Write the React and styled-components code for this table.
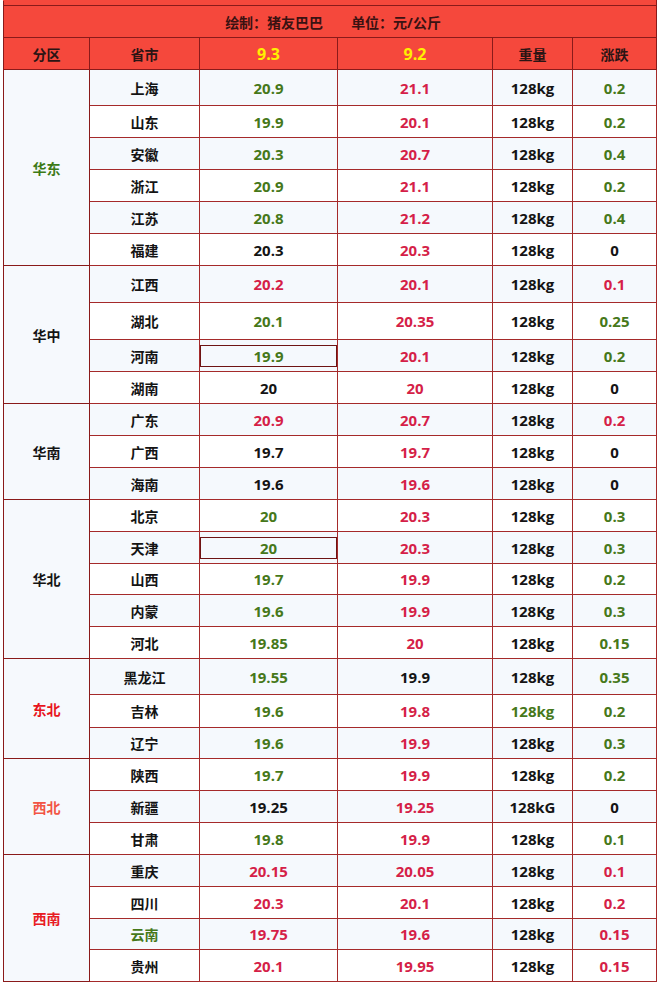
import React from "react";
import styled, { createGlobalStyle } from "styled-components";

const GlobalStyle = createGlobalStyle`
    html, body {
        margin: 0;
        padding: 0;
        background: #fff;
    }
    body {
        font-family: "Open Sans", "Noto Sans CJK SC", sans-serif;
    }
`;

const colors = {
    g: "#46781a",
    r: "#d51f48",
    k: "#141414",
};

// [province, 9.3, colour, 9.2, colour, weight, colour, change, colour, row height]
const regions = [
    {
        name: "华东",
        color: "#3c7a16",
        rows: [
            ["上海", "20.9", "g", "21.1", "r", "128kg", "k", "0.2", "g", 36],
            ["山东", "19.9", "g", "20.1", "r", "128kg", "k", "0.2", "g", 32],
            ["安徽", "20.3", "g", "20.7", "r", "128kg", "k", "0.4", "g", 32],
            ["浙江", "20.9", "g", "21.1", "r", "128kg", "k", "0.2", "g", 32],
            ["江苏", "20.8", "g", "21.2", "r", "128kg", "k", "0.4", "g", 32],
            ["福建", "20.3", "k", "20.3", "r", "128kg", "k", "0", "k", 32],
        ],
    },
    {
        name: "华中",
        color: "#141414",
        rows: [
            ["江西", "20.2", "r", "20.1", "r", "128kg", "k", "0.1", "r", 37],
            ["湖北", "20.1", "g", "20.35", "r", "128kg", "k", "0.25", "g", 37],
            ["河南", "19.9", "g", "20.1", "r", "128kg", "k", "0.2", "g", 32, true],
            ["湖南", "20", "k", "20", "r", "128kg", "k", "0", "k", 32],
        ],
    },
    {
        name: "华南",
        color: "#141414",
        rows: [
            ["广东", "20.9", "r", "20.7", "r", "128kg", "k", "0.2", "r", 32],
            ["广西", "19.7", "k", "19.7", "r", "128kg", "k", "0", "k", 32],
            ["海南", "19.6", "k", "19.6", "r", "128kg", "k", "0", "k", 32],
        ],
    },
    {
        name: "华北",
        color: "#141414",
        rows: [
            ["北京", "20", "g", "20.3", "r", "128kg", "k", "0.3", "g", 32],
            ["天津", "20", "g", "20.3", "r", "128kg", "k", "0.3", "g", 32, true],
            ["山西", "19.7", "g", "19.9", "r", "128kg", "k", "0.2", "g", 31],
            ["内蒙", "19.6", "g", "19.9", "r", "128Kg", "k", "0.3", "g", 32],
            ["河北", "19.85", "g", "20", "r", "128kg", "k", "0.15", "g", 32],
        ],
    },
    {
        name: "东北",
        color: "#e8141c",
        rows: [
            ["黑龙江", "19.55", "g", "19.9", "k", "128kg", "k", "0.35", "g", 36],
            ["吉林", "19.6", "g", "19.8", "r", "128kg", "g", "0.2", "g", 33],
            ["辽宁", "19.6", "g", "19.9", "r", "128kg", "k", "0.3", "g", 31],
        ],
    },
    {
        name: "西北",
        color: "#f25545",
        rows: [
            ["陕西", "19.7", "g", "19.9", "r", "128kg", "k", "0.2", "g", 32],
            ["新疆", "19.25", "k", "19.25", "r", "128kG", "k", "0", "k", 32],
            ["甘肃", "19.8", "g", "19.9", "r", "128kg", "k", "0.1", "g", 32],
        ],
    },
    {
        name: "西南",
        color: "#e81c24",
        rows: [
            ["重庆", "20.15", "r", "20.05", "r", "128kg", "k", "0.1", "r", 32],
            ["四川", "20.3", "r", "20.1", "r", "128kg", "k", "0.2", "r", 32],
            ["云南", "19.75", "r", "19.6", "r", "128kg", "k", "0.15", "r", 31, false, "g"],
            ["贵州", "20.1", "r", "19.95", "r", "128kg", "k", "0.15", "r", 32],
        ],
    },
];

const App = () => {
    let index = 0;

    return (
        <>
            <GlobalStyle />
            <Page>
                <Table>
                    <colgroup>
                        <col style={{ width: 86 }} />
                        <col style={{ width: 110 }} />
                        <col style={{ width: 138 }} />
                        <col style={{ width: 155 }} />
                        <col style={{ width: 80 }} />
                        <col style={{ width: 84 }} />
                    </colgroup>
                    <tbody>
                        <tr>
                            <Strip colSpan={6} />
                        </tr>
                        <tr>
                            <TitleCell colSpan={6}>
                                <TitleLine>
                                    <span>绘制：猪友巴巴</span>
                                    <span>单位：元/公斤</span>
                                </TitleLine>
                            </TitleCell>
                        </tr>
                        <tr>
                            <HeadCell>分区</HeadCell>
                            <HeadCell>省市</HeadCell>
                            <HeadCell $date>9.3</HeadCell>
                            <HeadCell $date>9.2</HeadCell>
                            <HeadCell>重量</HeadCell>
                            <HeadCell>涨跌</HeadCell>
                        </tr>
                        {regions.map((region) =>
                            region.rows.map((row, i) => {
                                const [prov, a, ac, b, bc, w, wc, d, dc, h, boxed, pc] = row;
                                const light = index % 2 === 0;
                                index += 1;
                                return (
                                    <Row key={prov} $h={h} $light={light}>
                                        {i === 0 && (
                                            <RegionCell rowSpan={region.rows.length} $color={region.color}>
                                                {region.name}
                                            </RegionCell>
                                        )}
                                        <Cell $color={colors[pc || "k"]}>{prov}</Cell>
                                        <Cell $num $color={colors[ac]}>
                                            {boxed ? <Boxed>{a}</Boxed> : a}
                                        </Cell>
                                        <Cell $num $color={colors[bc]}>{b}</Cell>
                                        <Cell $num $color={colors[wc]}>{w}</Cell>
                                        <Cell $num $color={colors[dc]}>{d}</Cell>
                                    </Row>
                                );
                            })
                        )}
                    </tbody>
                </Table>
            </Page>
        </>
    );
};

const Page = styled.div`
    width: 660px;
    padding-left: 3px;
    box-sizing: border-box;
`;

const Table = styled.table`
    width: 653px;
    table-layout: fixed;
    border-collapse: collapse;
    font-size: 14px;
    font-weight: 700;

    td {
        border: 1px solid #8a1a1a;
        padding: 0;
        text-align: center;
        vertical-align: middle;
        box-sizing: border-box;
    }
`;

const Strip = styled.td`
    height: 5px;
    background: #f5483c;
    && {
        border-top: 1px solid #f5483c;
    }
`;

const TitleCell = styled.td`
    height: 32px;
    background: #f5483c;
    color: #3a1212;
`;

const TitleLine = styled.div`
    display: flex;
    justify-content: center;
    gap: 28px;
    padding-left: 6px;
`;

const HeadCell = styled.td`
    height: 32px;
    background: #f5483c;
    color: ${(p) => (p.$date ? "#fff000" : "#2a1414")};
    font-size: ${(p) => (p.$date ? "16px" : "14px")};
`;

const Row = styled.tr`
    height: ${(p) => p.$h}px;
    background: ${(p) => (p.$light ? "#f5f9fd" : "#ffffff")};

    td {
        border-color: #a52a2a;
    }
`;

const RegionCell = styled.td`
    background: #f6f9fd;
    color: ${(p) => p.$color};
    border-color: #8a1a1a !important;
`;

const Cell = styled.td`
    color: ${(p) => p.$color};
    font-size: ${(p) => (p.$num ? "15px" : "14px")};
`;

const Boxed = styled.div`
    height: 22px;
    line-height: 20px;
    box-sizing: border-box;
    border: 1px solid #6e1414;
`;

export default App;
